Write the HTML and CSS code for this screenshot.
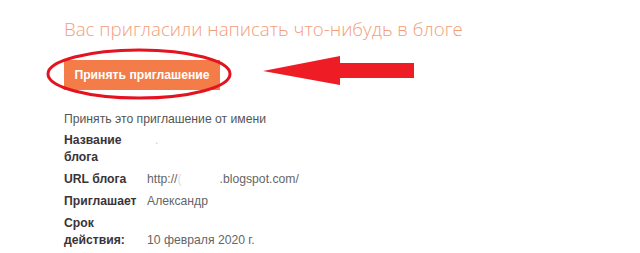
FILE: index.html
```html
<!DOCTYPE html>
<html lang="ru">
<head>
<meta charset="utf-8">
<link rel="stylesheet" href="styles.css">
</head>
<body>
<div class="page">
  <h1 class="title">Вас пригласили написать что-нибудь в блоге</h1>
  <div class="action">
    <button class="accept">Принять приглашение</button>
    <svg class="ellipse" width="186" height="52" viewBox="0 0 186 52"><ellipse cx="93" cy="26" rx="91" ry="24" fill="none" stroke="#e3141f" stroke-width="3"/></svg>
    <svg class="arrow" width="154" height="32" viewBox="0 0 154 32"><polygon points="1,15 78,0 78,7 152,7 152,22 78,22 78,29" fill="#ee1c25"/></svg>
  </div>
  <p class="intro">Принять это приглашение от имени</p>
  <div class="details">
    <div class="label">Название блога</div><div class="value"><span class="dot">.</span></div>
    <div class="label">URL блога</div><div class="value">http://<span class="faint">(</span><span class="blur"></span>.blogspot.com/</div>
    <div class="label">Приглашает</div><div class="value">Александр</div>
    <div class="label">Срок действия:</div><div class="value bottom">10 февраля 2020 г.</div>
  </div>
</div>
</body>
</html>
```
FILE: styles.css
```css
html, body {
  margin: 0;
  background: #fff;
}
.page {
  padding: 17px 0 0 64px;
  font-family: "Liberation Sans", Arial, sans-serif;
}
.title {
  margin: 0;
  font-family: "Open Sans", sans-serif;
  font-weight: 300;
  font-size: 18.7px;
  line-height: 24px;
  color: #f29e7b;
}
.action {
  position: relative;
  margin-top: 19px;
  height: 30px;
}
.accept {
  display: block;
  width: 156px;
  height: 30px;
  border: 0;
  padding: 0;
  background: #f47c48;
  color: #fff;
  font-family: "Liberation Sans", Arial, sans-serif;
  font-weight: bold;
  font-size: 12.2px;
}
.ellipse {
  position: absolute;
  left: -18px;
  top: -12px;
}
.arrow {
  position: absolute;
  left: 198px;
  top: -4px;
}
.intro {
  margin: 21px 0 0;
  font-size: 12.2px;
  line-height: 17px;
  color: #555;
}
.details {
  display: grid;
  grid-template-columns: 76px auto;
  column-gap: 7px;
  row-gap: 5px;
  margin-top: 4px;
  font-size: 12.2px;
  line-height: 17px;
}
.label {
  font-weight: bold;
  color: #3a3338;
}
.value {
  color: #666;
}
.bottom {
  align-self: end;
}
.dot {
  color: #ccc;
  margin-left: 8px;
}
.faint {
  color: #ddd;
}
.blur {
  display: inline-block;
  width: 38px;
}
```
